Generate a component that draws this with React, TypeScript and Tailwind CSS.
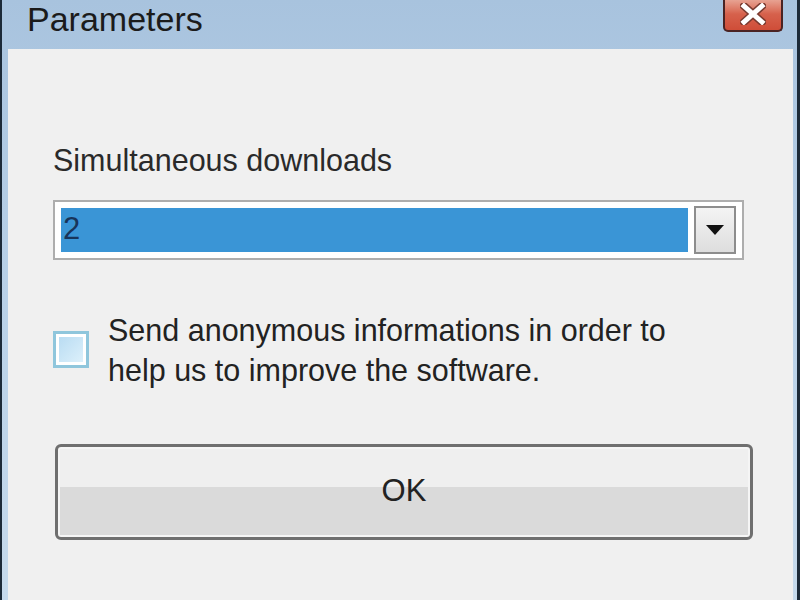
import { useState } from "react";

export default function App() {
    const [sendInfo, setSendInfo] = useState(false);

    return (
        <div
            className="w-[800px] h-[600px] flex bg-[#1c2a38] overflow-hidden"
            style={{ fontFamily: '"Liberation Sans", Arial, sans-serif' }}
        >
            <div className="ml-[2px] mr-[3px] flex-1 flex flex-col bg-gradient-to-b from-[#a8c3de] via-[#b9d1e8] to-[#c6daec]">
                {/* Barre de titre */}
                <div className="h-[49px] flex items-start justify-between pl-[25px] pr-[14px]">
                    <span className="text-[34px] leading-[38px] text-[#1b1b1b]">
                        Parameters
                    </span>
                    <button className="w-[60px] h-[34px] -mt-[2px] rounded-b-[5px] border-2 border-t-0 border-[#4a2323] bg-gradient-to-b from-[#e9ab9c] via-[#d6614c] to-[#cf4d38] flex items-center justify-center">
                        <svg width="26" height="22" viewBox="0 0 26 22">
                            <path
                                d="M4 3 L22 19 M22 3 L4 19"
                                stroke="#7a3a30"
                                strokeWidth="8"
                                strokeLinecap="square"
                            />
                            <path
                                d="M4 3 L22 19 M22 3 L4 19"
                                stroke="#ffffff"
                                strokeWidth="5"
                                strokeLinecap="square"
                            />
                        </svg>
                    </button>
                </div>

                {/* Contenu */}
                <div className="flex-1 mx-[6px] mr-[4px] bg-[#f0f0f0] pl-[45px] pr-[37px] pt-[96px]">
                    <p className="text-[30.5px] leading-none text-[#2a2a2a]">Simultaneous downloads</p>

                    <div className="mt-[24px] h-[60px] mr-[12px] border-2 border-[#adadad] bg-white p-[6px] flex items-center gap-[6px]">
                        <div className="flex-1 h-full bg-[#3a95d6] pl-[2px] flex items-center text-[31px] text-[#18345a]">
                            2
                        </div>
                        <div className="w-[42px] h-[48px] border-2 border-[#8d8d8d] bg-gradient-to-b from-[#f4f4f4] to-[#dedede] flex items-center justify-center">
                            <svg width="18" height="10" viewBox="0 0 18 10">
                                <path d="M0 0 L18 0 L9 10 Z" fill="#111" />
                            </svg>
                        </div>
                    </div>

                    {/* Case à cocher */}
                    <label className="mt-[50px] flex items-center gap-[19px] cursor-pointer">
                        <span
                            onClick={() => setSendInfo(!sendInfo)}
                            className="w-[36px] h-[37px] border-[3px] border-[#8fc6dc] bg-white p-[3px] shrink-0"
                        >
                            <span className="block w-full h-full bg-gradient-to-br from-[#b9dcf2] to-[#dcf0fb]" />
                        </span>
                        <span className="text-[30.5px] leading-[40px] text-[#222]">
                            Send anonymous informations in order to
                            <br />
                            help us to improve the software.
                        </span>
                    </label>

                    {/* Bouton OK */}
                    <button className="relative mt-[54px] ml-[2px] w-[698px] h-[96px] rounded-[6px] border-[3px] border-[#6f6f6f] p-[2px] bg-[#f5f5f5]">
                        <div className="w-full h-full rounded-[3px] flex flex-col">
                            <div className="h-[45%] bg-[#efefef]" />
                            <div className="flex-1 bg-[#dadada]" />
                        </div>
                        <span className="absolute inset-0 flex items-center justify-center text-[31px] text-[#222]">
                            OK
                        </span>
                    </button>
                </div>
            </div>
        </div>
    );
}
